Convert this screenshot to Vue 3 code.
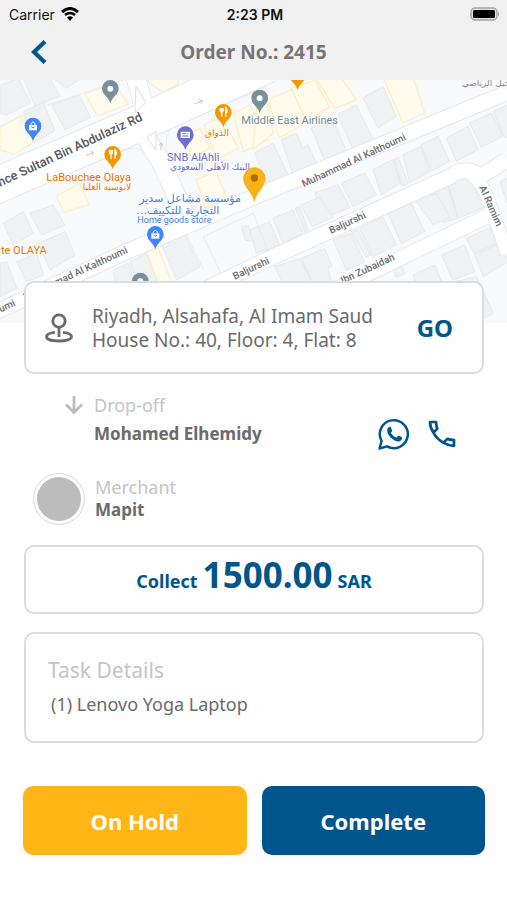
<script setup>
import { ref } from 'vue'

const order = ref({
  number: '2415',
  address: ['Riyadh, Alsahafa, Al Imam Saud', 'House No.: 40, Floor: 4, Flat: 8'],
  customer: 'Mohamed Elhemidy',
  merchant: 'Mapit',
  amount: '1500.00',
  currency: 'SAR',
  items: [{ qty: 1, name: 'Lenovo Yoga Laptop' }]
})

// map buildings
const buildings = [
  '0,15 55,-5 92,68 20,105 0,98', '70,-5 150,-5 180,48 105,78', '160,-5 245,-5 200,25',
  '155,75 238,45 272,112 195,148', '70,95 130,68 165,152 100,188',
  '10,430 70,395 100,460 40,495', '90,400 160,375 195,435 125,465',
  '115,490 195,455 225,525 150,570', '0,550 20,545 50,625 0,650', '50,545 110,520 130,585 80,605',
  '485,495 555,465 600,560 530,600', '390,545 440,520 475,610 410,610', '340,570 385,550 405,610 345,610',
  '1089,54 1149,19 1189,109 1134,144', '1014,104 1069,74 1119,179 1059,209',
  '934,144 999,114 1039,214 974,244', '844,179 889,159 909,204 924,194 954,259 879,284',
  '764,219 819,189 869,294 809,329', '1339,174 1404,139 1434,209 1369,244',
  '1409,129 1474,99 1509,169 1444,202', '1479,94 1530,72 1530,180 1512,168',
  '1264,194 1314,169 1349,244 1294,274', '1209,224 1262,199 1289,274 1229,309',
  '1119,269 1180,238 1200,310 1144,344', '1183,237 1195,232 1224,311 1205,318',
  '1024,309 1094,279 1129,344 1059,379', '944,339 1014,314 1050,382 980,412',
  '1344,309 1409,289 1449,384 1375,415', '1290,335 1342,311 1373,415 1330,428',
  '1500,305 1530,290 1530,380 1525,380',
  '749,450 809,425 839,495 769,520', '819,415 879,390 909,460 849,490', '886,384 898,379 925,449 914,455',
  '902,375 959,352 1000,412 938,440', '999,480 1052,460 1094,545 1039,570', '1055,456 1073,448 1112,526 1098,532',
  '1079,445 1149,410 1189,495 1119,530', '1164,400 1234,370 1274,455 1204,490',
  '1249,365 1310,340 1350,412 1300,435',
  '824,560 899,535 939,610 849,610', '904,535 974,505 996,558 984,565 995,610 939,610',
  '1174,560 1199,550 1216,580 1189,592', '1324,525 1394,495 1424,575 1359,600',
  '1399,475 1480,438 1500,486 1422,520', '1424,524 1502,490 1525,545 1450,590',
  '1239,585 1304,555 1340,640 1260,640', '1365,605 1430,590 1480,700 1440,720',
  '725,440 745,438 760,485 735,480'
]

const shops = [
  '255,42 340,8 385,72 292,108', '0,142 62,105 100,188 42,222 0,210', '440,2 470,-10 530,-10 535,12 490,38',
  '170,348 240,310 268,374 190,398', '555,165 600,145 630,205 575,235', '612,135 665,110 715,205 650,238',
  '700,100 750,75 805,180 730,215', '770,80 800,62 820,160 759,208',
  '804,59 874,29 924,124 839,174', '874,24 945,2 989,80 919,124', '949,-5 1025,-5 1069,59 1004,86',
  '1150,-5 1240,-5 1274,99 1209,129', '590,298 648,276 684,360 615,385',
  '440,515 475,505 515,610 475,610', '615,385 700,350 725,372 650,406'
]

const plots = [
  'M610 470 L760 400 L820 555 L665 585 Z',
  'M500 235 Q490 160 520 140 L800 20',
  'M500 235 Q545 330 590 390',
  'M0 360 L390 205 Q430 200 450 235 L520 385',
  'M0 140 L140 75 L400 -10',
  'M550 445 L610 568'
]

// white streets
const streets = [
  { d: 'M-20 700 L380 515 L760 352 L1521 38', w: 44 },
  { d: 'M560 655 L820 530 L1350 290 Q1400 255 1440 290 L1521 240', w: 44 },
  { d: 'M960 650 L1180 545 L1480 400', w: 42 },
  { d: 'M1410 280 Q1450 310 1465 360 L1521 520', w: 36 },
  { d: 'M405 -10 Q440 80 430 150 Q450 200 480 240 L565 425', w: 54 },
  { d: 'M-30 325 L430 125 L800 -45', w: 106 }
]

// pin kinds: colour and the little mark inside the head
const pins = [
  { x: 331, y: 70, color: '#78909c', kind: 'dot' },
  { x: 779, y: 99, color: '#78909c', kind: 'dot' },
  { x: 421, y: 648, color: '#78909c', kind: 'dot' },
  { x: 99, y: 183, color: '#4285f4', kind: 'bag' },
  { x: 466, y: 508, color: '#4285f4', kind: 'bag' },
  { x: 338, y: 268, color: '#f29900', kind: 'food' },
  { x: 670, y: 142, color: '#f29900', kind: 'food' },
  { x: 893, y: 30, color: '#f29900', kind: 'food' },
  { x: 556, y: 209, color: '#6f6fd0', kind: 'card' }
]
</script>

<template>
  <div class="screen">
    <header class="top">
      <div class="status">
        <div class="carrier">
          <span>Carrier</span>
          <svg width="18" height="14" viewBox="0 0 18 14" aria-hidden="true">
            <path d="M1 5 Q9 -2 17 5" fill="none" stroke="#000" stroke-width="3" />
            <path d="M4 8 Q9 4 14 8" fill="none" stroke="#000" stroke-width="2.6" />
            <path d="M6 10.6 Q9 8 12 10.6 L9 14 Z" />
          </svg>
        </div>
        <strong class="clock">2:23 PM</strong>
        <div class="battery">
          <svg width="31" height="14" viewBox="0 0 31 14" aria-hidden="true">
            <rect x="1" y="1" width="26" height="12" rx="4" fill="#ddd" stroke="#a5a5a5" stroke-width="1.5" />
            <rect x="3" y="3" width="22" height="8" rx="1.5" />
            <path d="M28 4.5 Q30.5 7 28 9.5 Z" fill="#a5a5a5" />
          </svg>
        </div>
      </div>
      <nav class="nav">
        <button class="back" type="button" aria-label="Back">
          <svg width="16" height="24" viewBox="0 0 16 24" aria-hidden="true">
            <path d="M14 1.5 L3 12 L14 22.5" fill="none" stroke="#00568c" stroke-width="4.2" />
          </svg>
        </button>
        <h1>Order No.: {{ order.number }}</h1>
      </nav>
    </header>

    <section class="map" aria-label="Map">
      <svg viewBox="0 0 1521 729" preserveAspectRatio="xMidYMid slice">
        <rect width="1521" height="729" fill="#f8f9fb" />
        <g fill="#f0f1f3" stroke="#e6e8ea" stroke-width="3" stroke-linejoin="round">
          <polygon v-for="b in buildings" :key="b" :points="b" />
        </g>
        <g fill="#fffbec" stroke="#fcefc6" stroke-width="4" stroke-linejoin="round">
          <polygon v-for="s in shops" :key="s" :points="s" />
        </g>
        <g fill="none" stroke="#e8eaec" stroke-width="3">
          <path v-for="p in plots" :key="p" :d="p" />
        </g>
        <g fill="none" stroke="#e6e8ea">
          <path v-for="s in streets" :key="s.d" :d="s.d" :stroke-width="s.w + 6" />
        </g>
        <g fill="none" stroke="#fff">
          <path v-for="s in streets" :key="s.d" :d="s.d" :stroke-width="s.w" />
        </g>
        <g fill="none" stroke="#c4c7ca" stroke-width="3">
          <path d="M583 72 L606 62 M597 58 L607 62 L602 72" />
          <path d="M258 226 L280 217 M271 213 L281 217 L276 226" />
          <path d="M483 210 L483 190 M477 196 L483 188 L489 196" />
          <path d="M440 172 L468 154 L468 210 Z M408 20 L438 68 L405 98 Z" stroke="#dddfe2" />
        </g>

        <g class="street-names">
          <text class="main-road" transform="translate(430 120) rotate(-25)">Prince Sultan Bin Abdulaziz Rd</text>
          <text transform="translate(911 322) rotate(-25)">Muhammad Al Kalthoumi</text>
          <text transform="translate(76 661) rotate(-25)">Muhammad Al Kalthoumi</text>
          <text class="to-end" transform="translate(48 676) rotate(-25)">Kalthoumi</text>
          <text transform="translate(993 462) rotate(-25)">Baljurshi</text>
          <text transform="translate(704 599) rotate(-25)">Baljurshi</text>
          <text transform="translate(1028 612) rotate(-25)">Ibn Zubaidah</text>
          <text transform="translate(1437 322) rotate(66)">Al Ramim</text>
        </g>

        <g v-for="(p, i) in pins" :key="i" :transform="`translate(${p.x} ${p.y})`">
          <path d="M0 0 C-4 -18 -25 -26 -25 -45 A25 25 0 0 1 25 -45 C25 -26 4 -18 0 0 Z" :fill="p.color" />
          <circle v-if="p.kind === 'dot'" cy="-44" r="9" fill="#fff" />
          <g v-else-if="p.kind === 'bag'">
            <path d="M-12 -48 H12 V-32 H-12 Z" fill="#fff" />
            <path d="M-6 -48 V-52 Q0 -62 6 -52 V-48" fill="none" stroke="#fff" stroke-width="3" />
            <path d="M-5 -43 Q0 -35 5 -43" fill="none" :stroke="p.color" stroke-width="3" />
          </g>
          <path v-else-if="p.kind === 'food'" d="M-9 -58 V-48 Q-5 -43 -1 -48 V-58 M-5 -58 V-32 M7 -32 V-58 Q14 -50 10 -44 H7" fill="none" stroke="#fff" stroke-width="4" />
          <g v-else>
            <rect x="-14" y="-54" width="28" height="19" rx="2" fill="#fff" />
            <path d="M-9 -48 H2 M6 -48 H9 M-9 -41 H9" :stroke="p.color" stroke-width="3" />
          </g>
        </g>

        <g class="places">
          <text x="724" y="133" fill="#6f8795">Middle East Airlines</text>
          <text x="501" y="243" fill="#6c6cc9">SNB AlAhli</text>
          <text class="ar" x="630" y="270" fill="#6c6cc9">البنك الأهلي السعودي</text>
          <text x="139" y="302" fill="#e37400">LaBouchee Olaya</text>
          <text class="ar" x="321" y="331" fill="#e37400">لابوسيه العليا</text>
          <text class="ar" x="651" y="169" fill="#e37400">الذواق</text>
          <text class="to-end" x="140" y="522" fill="#e37400">te OLAYA</text>
          <text class="ar big" x="570" y="367" fill="#3b7de0">مؤسسة مشاعل سدير</text>
          <text class="ar big" x="534" y="401" fill="#3b7de0">التجارية للتكييف...</text>
          <text class="small" x="412" y="430" fill="#3b7de0">Home goods store</text>
          <text class="ar" x="1458" y="18" fill="#85898d">خيل الرياضي</text>
        </g>

        <path d="M763 363 C757 335 731 322 731 295 A32 32 0 0 1 795 295 C795 322 769 335 763 363 Z" fill="#fbb216" stroke="#e8a408" stroke-width="2" />
        <circle cx="763" cy="294" r="11" fill="#a66e0c" />
      </svg>
    </section>

    <main class="content">
      <section class="card address">
        <svg class="place" width="28" height="32" viewBox="0 0 28 32" aria-hidden="true">
          <g fill="none" stroke="#6b6b6b" stroke-width="2.8">
            <circle cx="14" cy="9" r="6.2" />
            <path d="M14 15 V25" />
            <path d="M10 20.4 C4.500 21 1.500 22.700 1.500 24.700 C1.500 27.300 7 29 14 29 C21 29 26.500 27.300 26.500 24.700 C26.500 22.700 23.500 21 18 20.400" />
          </g>
        </svg>
        <p class="lines">
          <span v-for="line in order.address" :key="line">{{ line }}</span>
        </p>
        <button class="go" type="button">GO</button>
      </section>

      <section class="party dropoff">
        <svg class="arrow" width="20" height="20" viewBox="0 0 20 20" aria-hidden="true">
          <path d="M10 1 V17 M2 9.500 L10 17.500 L18 9.500" fill="none" stroke="#bdbdbd" stroke-width="2.8" />
        </svg>
        <div class="who">
          <span class="role">Drop-off</span>
          <strong>{{ order.customer }}</strong>
        </div>
        <div class="contacts">
          <button type="button" aria-label="WhatsApp">
            <svg width="32" height="32" viewBox="0 0 32 32" aria-hidden="true">
              <path d="M1.500 30.500 L3.600 23 A14 14 0 1 1 9 28.400 Z" fill="none" stroke="#00568c" stroke-width="2.500" stroke-linejoin="round" />
              <path d="M9.500 10.200 Q11 8 12.700 8.900 L14.200 12.400 Q14.300 13.400 12.800 14.800 Q14.800 18.400 18.400 19.700 L20.200 17.800 Q20.900 17.300 24 19.200 Q24.500 22.500 21.200 23.400 Q17.500 24 12.700 19.600 Q8 14.600 9.500 10.200 Z" fill="#00568c" />
            </svg>
          </button>
          <button type="button" aria-label="Call">
            <svg width="28" height="28" viewBox="0 0 28 28" aria-hidden="true">
              <path d="M2 2 H8 Q8.200 5.500 9.200 8.700 L5.400 12.600 Q2 7.500 2 2 Z M26 26 V20.200 Q22.500 20 19.300 18.900 L15.500 22.700 Q20.500 25.700 26 26 Z M5.400 12.600 Q9 19.200 15.500 22.700" fill="none" stroke="#00568c" stroke-width="2.700" stroke-linejoin="round" />
            </svg>
          </button>
        </div>
      </section>

      <section class="party merchant">
        <div class="avatar"></div>
        <div class="who">
          <span class="role">Merchant</span>
          <strong>{{ order.merchant }}</strong>
        </div>
      </section>

      <section class="card collect">
        <span>Collect</span>
        <strong>{{ order.amount }}</strong>
        <span>{{ order.currency }}</span>
      </section>

      <section class="card details">
        <h2>Task Details</h2>
        <p v-for="item in order.items" :key="item.name">({{ item.qty }}) {{ item.name }}</p>
      </section>

      <div class="actions">
        <button class="hold" type="button">On Hold</button>
        <button class="complete" type="button">Complete</button>
      </div>
    </main>
  </div>
</template>

<style>
body { margin: 0; background: #fefefe; }
</style>

<style scoped>
.screen { min-height: 100vh; font-family: "Noto Sans", "Open Sans", sans-serif; color: #6b6b6b; background: #fefefe; }
button { padding: 0; border: 0; background: none; font-family: inherit; cursor: pointer; }
svg { display: block; }

.top { padding-bottom: 4px; background: #f1f1f1; }
.status { display: grid; grid-template-columns: 1fr auto 1fr; align-items: center; height: 28px; padding: 0 6px 0 9px; font-family: Inter, sans-serif; font-size: 14px; color: #111; }
.carrier { display: flex; align-items: center; gap: 6px; }
.clock { font-weight: 600; }
.battery { display: flex; justify-content: flex-end; }
.nav { display: grid; grid-template-columns: 47px 1fr 47px; align-items: center; height: 48px; }
.back { display: flex; justify-content: flex-end; }
.nav h1 { margin: 0; font-size: 19px; line-height: 24px; font-weight: 700; text-align: center; color: #757575; }

.map { height: 243px; overflow: hidden; }
.map svg { width: 100%; height: 100%; }
.street-names { font-family: Roboto, sans-serif; font-size: 30px; font-weight: 500; fill: #6a6d70; stroke: #fff; stroke-width: 4px; paint-order: stroke; }
.street-names .main-road { font-size: 38px; fill: #55585b; text-anchor: end; }
.to-end { text-anchor: end; }
.places { font-family: Roboto, sans-serif; font-size: 33px; font-weight: 400; stroke: #fff; stroke-width: 4px; paint-order: stroke; }
.places .small { font-size: 27px; }
.places .ar { font-family: "DejaVu Sans", sans-serif; font-size: 27px; text-anchor: middle; stroke-width: 2px; direction: rtl; }
.places .ar.big { font-size: 33px; }

.content { position: relative; display: flex; flex-direction: column; margin-top: -42px; padding: 0 23px 24px 24px; }
.card { box-sizing: border-box; border: 2px solid #dcdcdc; border-radius: 10px; background: #fefefe; }

.address { display: flex; align-items: center; height: 93px; padding: 0 29px 0 19px; }
.lines { display: flex; flex-direction: column; flex: 1; margin: 0 0 0 19px; font-size: 19px; line-height: 24px; }
.go { font-size: 24px; line-height: 32px; font-weight: 700; color: #00568c; }

.party { display: flex; }
.role { font-size: 18px; line-height: 24px; color: #c4c4c4; }
.who { display: flex; flex-direction: column; flex: 1; }
.who strong { font-size: 17px; line-height: 24px; }
.dropoff { margin-top: 19px; padding: 0 28px 0 40px; }
.dropoff .who { gap: 5px; margin-left: 10px; }
.arrow { margin-top: 2px; }
.contacts { display: flex; align-items: center; align-self: flex-end; gap: 18px; margin-bottom: -4px; }

.merchant { align-items: center; margin-top: 27px; padding-left: 9px; }
.merchant .who { margin-left: 10px; }
.merchant .role { line-height: 22px; }
.avatar { box-sizing: border-box; width: 52px; height: 52px; border: 1px solid #dadada; border-radius: 50%; padding: 3px; background: #bcbcbc content-box; }

.collect { display: flex; align-items: baseline; justify-content: center; gap: 5px; height: 69px; margin-top: 20px; padding-top: 4px; color: #00568c; }
.collect span { font-size: 18px; font-weight: 700; }
.collect strong { font-size: 35px; line-height: 48px; }

.details { height: 111px; margin-top: 18px; padding: 22px 22px 0; }
.details h2 { margin: 0; font-size: 21px; line-height: 28px; font-weight: 400; color: #c4c4c4; }
.details p { margin: 8px 0 0 3px; font-size: 18px; line-height: 24px; }

.actions { display: grid; grid-template-columns: 1fr 1fr; gap: 15px; margin: 43px -1px 0; }
.actions button { height: 69px; border-radius: 10px; font-size: 22px; font-weight: 700; color: #fff; }
.hold { background: #ffb516; }
.complete { background: #00568c; }
</style>
